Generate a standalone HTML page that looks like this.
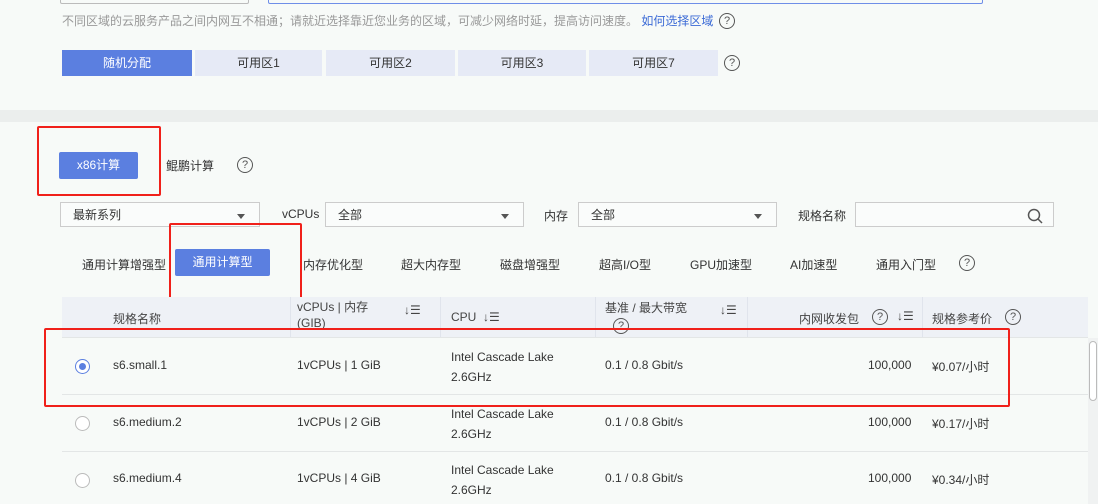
<!DOCTYPE html>
<html><head><meta charset="utf-8"><style>
body{margin:0;width:1098px;height:504px;overflow:hidden;background:#f7faf8;font-family:"Liberation Sans","Noto Sans CJK SC",sans-serif;font-size:12px;color:#333;position:relative}
.a{position:absolute;white-space:nowrap}
.q{position:absolute;width:14px;height:14px;border:1.3px solid #555;border-radius:50%;font-size:11px;line-height:14px;text-align:center;color:#555}
.tab{position:absolute;top:50px;height:26px;line-height:26px;text-align:center;background:#e6eaf6;color:#333}
.sel{position:absolute;top:202px;height:25px;border:1px solid #ccc;background:#fafcfb;line-height:25px;padding-left:12px;box-sizing:border-box}
.sel i{position:absolute;right:14px;top:11px;border:4px solid transparent;border-top:5px solid #555;border-bottom:0}
.red{position:absolute;border:2px solid #f0201a;border-radius:2px}
.th{position:absolute;color:#444}
.rad{position:absolute;left:75px;width:13px;height:13px;border:1px solid #bbb;border-radius:50%;background:#fff}
</style></head><body>
<div class="a" style="left:60px;top:-4px;width:187px;height:6px;border:1px solid #bbb;border-radius:2px"></div>
<div class="a" style="left:268px;top:-4px;width:713px;height:6px;border:1px solid #6f8ee8;border-radius:2px"></div>
<div class="a" style="left:62px;top:12px;color:#999">不同区域的云服务产品之间内网互不相通；请就近选择靠近您业务的区域，可减少网络时延，提高访问速度。 <span style="color:#3b6ad6">如何选择区域</span></div>
<div class="q" style="left:719px;top:13px">?</div>
<div class="tab" style="left:62px;width:130px;background:#5b7fe0;color:#fff">随机分配</div>
<div class="tab" style="left:195px;width:127px">可用区1</div>
<div class="tab" style="left:326px;width:129px">可用区2</div>
<div class="tab" style="left:458px;width:128px">可用区3</div>
<div class="tab" style="left:589px;width:129px">可用区7</div>
<div class="q" style="left:724px;top:55px">?</div>
<div class="a" style="left:0;top:110px;width:1098px;height:12px;background:#ebeeed"></div>
<div class="a" style="left:59px;top:152px;width:79px;height:27px;background:#5b7fe0;color:#fff;line-height:27px;text-align:center;border-radius:2px">x86计算</div>
<div class="a" style="left:166px;top:157px">鲲鹏计算</div>
<div class="q" style="left:237px;top:157px">?</div>
<div class="red" style="left:37px;top:126px;width:120px;height:66px"></div>
<div class="sel" style="left:60px;width:200px">最新系列<i></i></div>
<div class="a" style="left:282px;top:207px">vCPUs</div>
<div class="sel" style="left:325px;width:199px">全部<i></i></div>
<div class="a" style="left:544px;top:207px">内存</div>
<div class="sel" style="left:578px;width:199px">全部<i></i></div>
<div class="a" style="left:798px;top:207px">规格名称</div>
<div class="sel" style="left:855px;width:199px"><svg style="position:absolute;right:10px;top:5px" width="16" height="16" viewBox="0 0 16 16" fill="none" stroke="#555" stroke-width="1.5"><circle cx="7" cy="7" r="5.5"/><path d="M11 11l4 4"/></svg></div>
<div class="a" style="left:82px;top:256px">通用计算增强型</div>
<div class="a" style="left:175px;top:249px;width:95px;height:27px;background:#5b7fe0;color:#fff;line-height:27px;text-align:center;border-radius:2px">通用计算型</div>
<div class="a" style="left:303px;top:256px">内存优化型</div>
<div class="a" style="left:401px;top:256px">超大内存型</div>
<div class="a" style="left:500px;top:256px">磁盘增强型</div>
<div class="a" style="left:599px;top:256px">超高I/O型</div>
<div class="a" style="left:690px;top:256px">GPU加速型</div>
<div class="a" style="left:790px;top:256px">AI加速型</div>
<div class="a" style="left:876px;top:256px">通用入门型</div>
<div class="q" style="left:959px;top:255px">?</div>
<div class="red" style="left:169px;top:223px;width:129px;height:74px"></div>
<div class="a" style="left:62px;top:297px;width:1026px;height:40px;background:#eef1f6"></div>
<div class="a" style="left:290px;top:297px;width:1px;height:40px;background:#e0e4ec"></div>
<div class="a" style="left:440px;top:297px;width:1px;height:40px;background:#e0e4ec"></div>
<div class="a" style="left:595px;top:297px;width:1px;height:40px;background:#e0e4ec"></div>
<div class="a" style="left:747px;top:297px;width:1px;height:40px;background:#e0e4ec"></div>
<div class="a" style="left:922px;top:297px;width:1px;height:40px;background:#e0e4ec"></div>
<div class="th" style="left:113px;top:310px">规格名称</div>
<div class="th" style="left:297px;top:299px;line-height:16px">vCPUs | 内存<br>(GIB)</div>
<div class="th" style="left:404px;top:303px">↓☰</div>
<div class="th" style="left:451px;top:310px">CPU &nbsp;↓☰</div>
<div class="th" style="left:605px;top:299px">基准 / 最大带宽</div>
<div class="q" style="left:613px;top:318px">?</div>
<div class="th" style="left:720px;top:303px">↓☰</div>
<div class="th" style="left:799px;top:310px">内网收发包</div>
<div class="q" style="left:872px;top:309px">?</div>
<div class="th" style="left:897px;top:309px">↓☰</div>
<div class="th" style="left:932px;top:310px">规格参考价</div>
<div class="q" style="left:1005px;top:309px">?</div>
<div class="a" style="left:62px;top:337px;width:1026px;height:1px;background:#e3e6e6"></div>
<div class="a" style="left:62px;top:394px;width:1026px;height:1px;background:#e3e6e6"></div>
<div class="a" style="left:62px;top:451px;width:1026px;height:1px;background:#e3e6e6"></div>
<div class="rad" style="top:359px;border-color:#5b7fe0"><div style="position:absolute;left:3px;top:3px;width:7px;height:7px;border-radius:50%;background:#5b7fe0"></div></div>
<div class="rad" style="top:416px"></div>
<div class="rad" style="top:473px"></div>
<div class="a" style="left:113px;top:358px">s6.small.1</div>
<div class="a" style="left:297px;top:358px">1vCPUs | 1 GiB</div>
<div class="a" style="left:451px;top:347px;line-height:20px">Intel Cascade Lake<br>2.6GHz</div>
<div class="a" style="left:605px;top:358px">0.1 / 0.8 Gbit/s</div>
<div class="a" style="left:868px;top:358px">100,000</div>
<div class="a" style="left:932px;top:358px">¥0.07/小时</div>
<div class="a" style="left:113px;top:415px">s6.medium.2</div>
<div class="a" style="left:297px;top:415px">1vCPUs | 2 GiB</div>
<div class="a" style="left:451px;top:404px;line-height:20px">Intel Cascade Lake<br>2.6GHz</div>
<div class="a" style="left:605px;top:415px">0.1 / 0.8 Gbit/s</div>
<div class="a" style="left:868px;top:415px">100,000</div>
<div class="a" style="left:932px;top:415px">¥0.17/小时</div>
<div class="a" style="left:113px;top:471px">s6.medium.4</div>
<div class="a" style="left:297px;top:471px">1vCPUs | 4 GiB</div>
<div class="a" style="left:451px;top:460px;line-height:20px">Intel Cascade Lake<br>2.6GHz</div>
<div class="a" style="left:605px;top:471px">0.1 / 0.8 Gbit/s</div>
<div class="a" style="left:868px;top:471px">100,000</div>
<div class="a" style="left:932px;top:471px">¥0.34/小时</div>
<div class="a" style="left:1088px;top:338px;width:10px;height:166px;background:#f0f2f2"></div>
<div class="a" style="left:1089px;top:341px;width:8px;height:60px;background:#fff;border:1px solid #bbb;border-radius:4px;box-sizing:border-box"></div>
<div class="red" style="left:44px;top:328px;width:962px;height:75px"></div>
</body></html>
